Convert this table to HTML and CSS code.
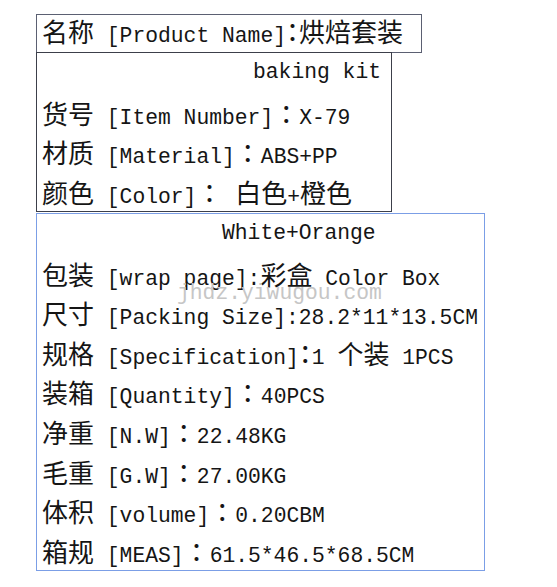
FILE: index.html
```html
<!DOCTYPE html>
<html lang="zh-CN">
<head>
<meta charset="utf-8">
<title>烘焙套装</title>
<link rel="stylesheet" href="styles.css">
</head>
<body>
<div class="sheet">
  <div class="box box-title">
    <div class="row row-title"><span class="zh">名称</span> [Product Name]<span class="zh colon half" lang="zh-TW">：</span><span class="zh">烘焙套装</span></div>
  </div>
  <div class="box box-mid">
    <div class="row align-right">baking kit</div>
    <div class="row"><span class="zh">货号</span> [Item Number]<span class="zh colon" lang="zh-TW">：</span>X-79</div>
    <div class="row"><span class="zh">材质</span> [Material]<span class="zh colon" lang="zh-TW">：</span>ABS+PP</div>
    <div class="row"><span class="zh">颜色</span> [Color]<span class="zh colon" lang="zh-TW">：</span> <span class="zh">白色</span>+<span class="zh">橙色</span></div>
  </div>
  <div class="box box-main">
    <div class="row indent">White+Orange</div>
    <div class="row"><span class="zh">包装</span> [wrap page]:<span class="zh">彩盒</span> Color Box</div>
    <div class="row"><span class="zh">尺寸</span> [Packing Size]:28.2*11*13.5CM</div>
    <div class="row"><span class="zh">规格</span> [Specification]<span class="zh colon half" lang="zh-TW">：</span>1 <span class="zh">个装</span> 1PCS</div>
    <div class="row"><span class="zh">装箱</span> [Quantity]<span class="zh colon" lang="zh-TW">：</span>40PCS</div>
    <div class="row"><span class="zh">净重</span> [N.W]<span class="zh colon" lang="zh-TW">：</span>22.48KG</div>
    <div class="row"><span class="zh">毛重</span> [G.W]<span class="zh colon" lang="zh-TW">：</span>27.00KG</div>
    <div class="row"><span class="zh">体积</span> [volume]<span class="zh colon" lang="zh-TW">：</span>0.20CBM</div>
    <div class="row"><span class="zh">箱规</span> [MEAS]<span class="zh colon" lang="zh-TW">：</span>61.5*46.5*68.5CM</div>
  </div>
  <div class="watermark">jhdz.yiwugou.com</div>
</div>
</body>
</html>
```

FILE: styles.css
```css
html, body {
  margin: 0;
  padding: 0;
  background: #ffffff;
}

body {
  font-family: "Liberation Mono", "Noto Sans CJK SC", monospace;
  font-size: 21.33px;
  color: #151515;
}

.sheet {
  position: relative;
  padding: 14px 0 0 36px;
  display: flex;
  flex-direction: column;
  align-items: flex-start;
}

.box {
  box-sizing: border-box;
  padding: 0 6px 0 5px;
  background: #ffffff;
}

.box-title {
  width: 386px;
  height: 39px;
  border: 1px solid #5b6072;
}

.box-mid {
  width: 356px;
  height: 160px;
  margin-top: -1px;
  border: 1px solid #3c3f4a;
}

.box-main {
  width: 449px;
  height: 358px;
  margin-top: 1px;
  border: 1px solid #7b9ee6;
}

.row {
  height: 39.6px;
  line-height: 39.6px;
  white-space: pre;
}

.row-title {
  height: 37px;
  line-height: 32px;
}

.zh {
  font-family: "Noto Sans CJK SC", sans-serif;
  font-size: 26px;
}

.colon {
  font-family: "Noto Sans CJK TC", "Noto Sans CJK SC", sans-serif;
}

.half {
  font-feature-settings: "halt" 1;
}

.align-right {
  text-align: right;
  padding-right: 4px;
}

.indent {
  padding-left: 180px;
}

.watermark {
  position: absolute;
  left: 177px;
  top: 285px;
  font-size: 21.33px;
  line-height: 16px;
  color: #c6c6c6;
  white-space: pre;
}
```
